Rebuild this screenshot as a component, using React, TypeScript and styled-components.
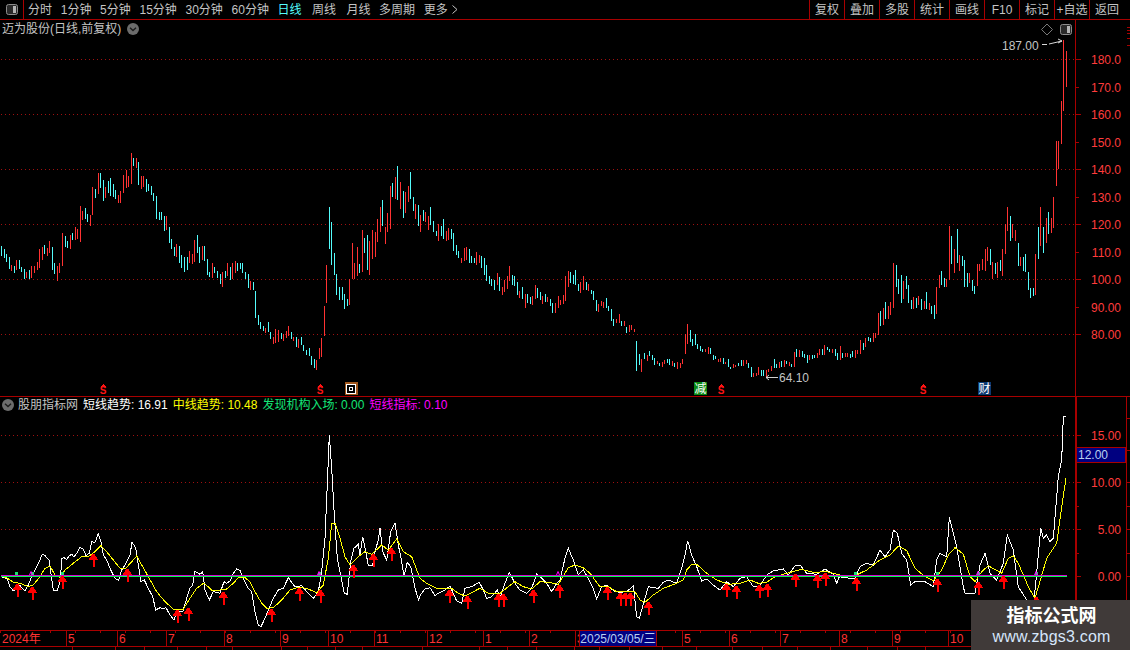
import React from "react";
import styled, { createGlobalStyle } from "styled-components";

const RED_LINE = "#a80000";
const GREY = "#c4c4c4";

const Global = createGlobalStyle`
  html, body { margin: 0; padding: 0; background: #000; overflow: hidden; }
  #root { width: 1130px; height: 650px; }
`;

const Screen = styled.div`
  position: relative;
  width: 1130px;
  height: 650px;
  overflow: hidden;
  display: flex;
  flex-direction: column;
  background: #000;
  color: ${GREY};
  font: 12px/1 "Liberation Sans", "Noto Sans CJK SC", sans-serif;
`;

const Toolbar = styled.header`
  flex: none;
  height: 19px;
  display: flex;
  align-items: stretch;
  border-bottom: 1px solid ${RED_LINE};
`;
const PanelToggle = styled.div`
  width: 23px;
  display: flex;
  align-items: center;
  justify-content: center;
  border-right: 1px solid ${RED_LINE};
`;
const PeriodList = styled.nav`
  display: flex;
  align-items: center;
  gap: 8.7px;
  padding-left: 4px;
`;
const Period = styled.span<{ $active?: boolean; $roomy?: boolean }>`
  color: ${(p) => (p.$active ? "#54fcfc" : GREY)};
  margin-right: ${(p) => (p.$roomy ? 1.7 : 0)}px;
  white-space: nowrap;
  display: inline-flex;
  align-items: center;
  gap: 4px;
`;
const ActionList = styled.div`
  margin-left: auto;
  display: flex;
  padding-right: 6px;
`;
const Action = styled.span`
  width: 34px;
  border-left: 1px solid ${RED_LINE};
  display: flex;
  align-items: center;
  justify-content: center;
  white-space: nowrap;
`;

const PricePane = styled.section`
  flex: none;
  height: 376px;
  display: flex;
  border-bottom: 1px solid ${RED_LINE};
`;
const IndicatorPane = styled.section`
  flex: none;
  height: 233px;
  display: flex;
`;
const Plot = styled.div`
  position: relative;
  width: 1075px;
  flex: none;
`;
const AxisBox = styled.div<{ $thick?: boolean }>`
  position: relative;
  flex: 1;
  border-left: ${(p) => (p.$thick ? 2 : 1)}px solid ${RED_LINE};
`;
const Drawing = styled.svg`
  display: block;
  font-family: "Liberation Sans", "Noto Sans CJK SC", sans-serif;
  font-size: 12px;
`;
const ChartTitle = styled.div`
  position: absolute;
  left: 2px;
  top: 3px;
  display: flex;
  align-items: center;
  gap: 6px;
`;
const Legend = styled.div`
  position: absolute;
  left: 2px;
  top: 2px;
  display: flex;
  align-items: center;
  gap: 5px;
`;
const LegendName = styled.span`
  margin-left: -1px;
`;
const LegendItem = styled.span<{ $color: string }>`
  color: ${(p) => p.$color};
  white-space: nowrap;
`;
const PriceBadge = styled.div`
  position: absolute;
  left: 0;
  top: 50px;
  width: 49px;
  height: 16px;
  box-sizing: border-box;
  border: 1px solid ${RED_LINE};
  border-left: none;
  background: #000080;
  color: #b8d0f0;
  display: flex;
  align-items: center;
  padding-left: 1px;
  font-size: 12px;
`;

const Timeline = styled.footer`
  position: relative;
  flex: none;
  height: 15px;
  display: flex;
  border-top: 1px solid ${RED_LINE};
  border-bottom: 1px solid ${RED_LINE};
  color: #ff3232;
  background: repeating-linear-gradient(90deg, ${RED_LINE} 0 1px, transparent 1px 25px) top left / 100% 2px no-repeat;
`;
const TimeCell = styled.span<{ $w: number }>`
  width: ${(p) => p.$w}px;
  flex: none;
  box-sizing: border-box;
  overflow: hidden;
  border-left: 1px solid ${RED_LINE};
  padding-left: 1px;
  display: flex;
  align-items: center;
  &:first-child { border-left: none; padding-left: 2px; }
`;
const DateBadge = styled.div`
  flex: none;
  width: 78px;
  height: 17px;
  margin: -1px 25px -1px 0;
  box-sizing: border-box;
  border: 1px solid ${RED_LINE};
  background: #000080;
  color: #b8d0f0;
  display: flex;
  align-items: center;
  justify-content: center;
  white-space: nowrap;
`;
const TabStrip = styled.div`
  flex: none;
  height: 3px;
  display: flex;
`;
const TabEdge = styled.span<{ $w: number }>`
  width: ${(p) => p.$w}px;
  flex: none;
  box-sizing: border-box;
  border-right: 1px solid ${RED_LINE};
`;
const Watermark = styled.aside`
  position: absolute;
  right: 0;
  bottom: 0;
  width: 159px;
  height: 50px;
  background: #403a39;
  display: flex;
  flex-direction: column;
  align-items: center;
  padding-left: 2px;
  box-sizing: border-box;
`;
const WatermarkTitle = styled.div`
  margin-top: 6px;
  color: #fff;
  font-size: 18px;
  line-height: 20px;
  font-weight: 700;
`;
const WatermarkUrl = styled.div`
  margin-top: 2px;
  color: #d6e6fb;
  font-size: 16px;
  line-height: 18px;
  letter-spacing: 0.2px;
`;

const CANDLES_A = `c4,288,318 c13,297,324 c19,312,336 c28,321,357 r34,345,363 c43,348,369 r49,330,360 c58,330,357 c64,351,366 c73,357,387 r79,366,384 c88,360,387 r94,348,384 r103,348,369 r112,336,360 r118,297,354 r127,291,330 c133,285,312 r142,294,318 r148,273,309 c157,291,360 c163,339,372 r172,348,393 r178,339,369 r187,249,348 c196,258,291 c202,273,294 r211,255,297 c217,249,270 r226,231,270 r232,237,267 r241,168,276 r247,183,210 c256,174,207 c262,192,216 r271,195,228 r277,111,195 c286,117,144 r295,69,132 c301,69,114 c310,90,153 r316,111,144 c325,93,129 c331,84,138 c340,102,141 c346,120,147 r355,135,159 r361,123,159 r370,75,129 r379,60,114 r385,78,111 r394,9,102 c400,24,48 r409,24,54 c415,36,105 r424,78,117 r430,78,111 c439,87,126 c445,102,123 c454,108,135 c460,129,153 c469,138,207 c478,186,210 c484,186,210 c493,198,243 r499,198,240 c508,231,279 c514,267,297 c523,291,318 r529,282,321 c538,288,339 c544,315,354 c553,321,366 c562,321,360 r568,303,339 r577,312,342 r583,270,336 c592,255,309 c598,291,339 r607,288,330 c613,288,333 c622,327,375 c628,366,381 r637,339,384 c643,351,369 c652,363,384 c661,372,402 r667,366,411 c676,363,384 r682,339,378 c691,351,390 r697,339,387 r706,333,369 c712,339,363 c721,339,357 c727,339,369 c736,366,387 c745,372,414 r751,393,420 c760,396,420 c766,423,504 c775,495,525 c781,516,537 c790,528,543 r796,534,549 c805,516,546 c811,546,567 r820,561,582 r826,537,579 r835,540,576 c844,549,567 r850,552,573 r859,543,564 r865,528,558 c874,546,567 r880,561,573 c889,561,591 r895,567,594 c904,561,585 c910,585,603 c919,600,615 c928,594,618 c934,618,645 c943,627,654 r949,630,660 r958,594,627 r964,564,621 r973,468,558 r979,345,459 c988,171,297 c994,216,345 c1003,309,375 c1009,372,435 c1018,411,450`;
const CANDLES_B = `c7,411,450 c13,432,477 c22,447,468 r28,387,465 r37,279,387 r43,339,387 r52,291,378 c58,342,369 r67,240,366 c73,264,309 c82,255,360 r88,273,375 r97,240,327 r106,246,321 r112,207,276 r121,171,246 c127,150,228 r136,231,282 r142,189,246 r151,108,237 c157,99,141 r166,81,147 c172,48,150 r181,96,177 c190,123,204 r196,126,189 r205,108,156 c211,66,147 c220,141,183 r226,162,207 c235,165,228 r241,195,246 c250,180,213 r256,186,216 r265,198,240 c271,171,225 c280,213,246 c289,243,258 r295,222,273 c304,228,258 c310,207,267 r319,243,273 r325,234,270 c334,237,267 c340,249,303 c349,285,315 c355,303,324 r364,324,339 r373,294,333 r379,291,330 c388,297,339 c394,318,339 c403,324,339 r409,306,345 r418,315,339 c424,318,354 c433,324,375 c439,345,393 c448,378,402 c454,387,408 c463,390,420 r472,369,405 c478,381,423 r487,411,435 r493,390,426 r502,378,417 r508,348,393 c517,375,405 c523,378,408 c532,396,435 r538,423,444 c547,411,447 r556,432,474 c562,432,459 c571,441,462 r577,438,465 r586,405,447 c592,414,444 c601,426,450 r607,438,462 c616,432,456 r622,441,456 c631,447,468 c637,459,489 r646,459,489 r655,438,474 r661,450,465 r670,435,462 r676,378,453 r685,363,411 c691,366,399 c700,375,402 c706,360,405 c715,402,423 r721,396,429 r730,378,420 c739,396,420 r745,402,423 c754,420,432 c760,423,450 c769,450,483 r775,462,486 r784,453,468 r790,456,474 c799,444,474 c805,468,483 c814,477,513 c820,507,528 r829,507,519 r838,492,519 c844,513,528 r853,513,528 c859,531,549 r868,525,546 r874,525,540 r883,537,546 c889,573,663 c898,612,645 r904,627,666 c913,609,627 r922,615,633 c928,603,618 c937,615,630 c943,624,645 r952,633,642 c958,639,648 r967,636,651 r973,630,642 c982,627,639 c988,627,645 r997,633,648 c1003,639,651 r1012,636,657`;
const CANDLES_C = `r0,549,564 r7,537,552 r16,462,522 r22,432,492 c31,450,486 c37,477,498 c46,462,495 c52,492,507 c61,498,513 c67,507,516 r76,507,516 r85,501,522 c91,504,522 c100,525,540 c106,528,537 r115,537,546 r121,534,546 c130,534,552 r136,546,552 c145,537,561 c151,561,567 r160,552,564 r166,555,561 c175,549,558 c184,540,558 r190,540,558 r199,540,552 c205,549,564 c214,561,591 r220,579,591 r229,579,588 r235,561,585 c244,570,588 c250,570,588 r259,570,594 r265,567,576 r274,558,573 c283,537,564 c289,552,564 r298,546,564 c304,543,561 r313,540,561 c319,543,552 r328,546,558 c334,552,561 r343,516,561 c349,507,531 r358,510,531 c367,513,531 c373,522,534 c382,525,549 r388,525,540 c397,525,537 c403,525,534 r412,519,534 r418,507,525 c427,507,525 r433,495,525 c442,501,510 c448,507,516 r457,507,519 c466,507,528 c472,519,540 r481,498,540 c487,519,534 r496,519,531 r502,519,531 c511,522,534 c517,513,531 r526,510,534 r532,510,522 r541,480,522 c550,489,510 r556,474,501 c565,471,483 c571,474,486 r580,459,486 r586,459,474 r595,399,465 c601,393,438 r610,384,435 c616,366,417 r625,378,417 r631,366,405 r640,249,384 c649,255,321 c655,297,342 c664,285,369 r670,303,357 c679,288,327 c685,315,369 c694,360,387 r700,351,387 c709,354,384 r715,348,375 c724,357,390 r733,363,387 c739,336,387 r748,369,390 c754,378,402 c763,375,417 r769,321,402 r778,285,324 c784,273,315 c793,294,321 r799,297,321 r808,138,300 c814,168,252 r823,207,279 c832,147,249 r838,225,273 c847,228,258 c853,240,321 c862,279,321 r868,279,309 c877,300,333 c883,318,342 r892,252,318 r898,252,273 r907,237,270 r916,207,273 r922,201,243 c931,207,255 r937,246,297 c946,249,282 r952,246,294 c961,240,273 r967,207,288 r976,132,222 r982,81,153 c991,108,183 r997,132,174 r1006,150,183 c1015,189,258 r1021,231,258 c1030,231,273 c1036,222,276 c1045,276,330 c1051,324,354 c1060,324,348 r1066,222,345 c1075,141,237 r1081,81,198 c1090,141,219 r1099,114,189 c1105,96,162 r1114,114,159 r1120,51,144`;

type Bar = { x: number; y: number; h: number; up: boolean };

const parseCandles = (src: string, x0: number, y0: number): Bar[] =>
  src.split(" ").map((t) => {
    const [zx, a, b] = t.slice(1).split(",").map(Number);
    const y = Math.round(y0 + a / 3);
    return { x: Math.floor(x0 + zx / 3), y, h: Math.max(1, Math.round(y0 + b / 3) - y), up: t[0] === "r" };
  });

const BARS: Bar[] = [
  ...parseCandles(CANDLES_A, 0, 150),
  ...parseCandles(CANDLES_B, 340, 150),
  ...parseCandles(CANDLES_C, 680, 180),
  { x: 1056, y: 141, h: 45, up: true },
  { x: 1058, y: 141, h: 28, up: true },
  { x: 1061, y: 101, h: 43, up: true },
  { x: 1063, y: 40, h: 71, up: true },
  { x: 1066, y: 51, h: 36, up: true },
];

const pts = (src: number[], x0: number, y0: number) => {
  const out: string[] = [];
  for (let i = 0; i < src.length; i += 2) out.push(`${(x0 + src[i] / 3).toFixed(1)},${(y0 + src[i + 1] / 3).toFixed(1)}`);
  return out.join(" ");
};

const WHITE_A = [3,455,15,458,22,462,30,485,40,498,52,490,60,482,75,498,85,480,95,455,108,430,118,410,127,387,135,392,147,405,152,440,160,495,172,496,180,470,186,400,192,398,200,403,208,392,215,388,222,396,230,385,240,367,250,372,258,392,268,385,275,350,285,352,295,326,303,350,310,390,320,405,332,435,345,460,356,466,365,435,378,415,390,390,396,352,407,368,415,420,423,470,433,465,445,490,458,515,467,555,480,548,490,552,498,548,510,570,522,585,530,560,548,560,560,520,570,490,578,480,584,440,590,442,600,448,608,440,615,495,628,525,640,500,660,505,672,470,680,475,690,468,700,445,710,432,720,436,730,460,745,490,755,500,765,560,775,600,783,605,795,580,805,555,820,520,835,495,850,490,865,458,885,485,905,482,920,500,940,520,955,500,965,440,975,340,983,150,988,30,995,130,1003,270,1012,400,1022,450,1033,505,1042,508,1052,410,1062,370,1075,358,1080,390,1088,335,1098,385,1105,420,1118,420,1125,380,1135,345,1140,310,1148,380,1160,405,1172,320,1185,293,1195,360,1205,410,1212,455,1222,412,1232,425,1245,490,1256,526];
const WHITE_B = [0,212,15,192,30,188,45,212,55,205,75,195,90,183,100,205,110,228,125,235,135,190,155,185,178,172,190,195,200,220,215,215,232,195,240,218,255,175,268,142,285,175,300,195,320,205,335,190,350,147,365,160,380,175,395,200,410,175,420,165,435,100,445,70,460,105,475,150,490,135,505,160,520,190,530,222,545,185,560,180,585,200,600,202,620,200,640,183,650,275,658,280,672,230,685,185,700,188,715,190,730,172,745,165,770,175,785,130,795,90,803,47,815,90,830,125,845,168,860,162,880,180,900,195,920,170,940,185,960,160,980,155,1000,185,1020,182,1040,150,1060,138,1090,132,1105,150,1125,122,1140,120,1160,145,1190,148,1215,132,1240,148,1250,175,1260,150];
const WHITE_C = [125,532,150,535,165,535,180,500,200,490,220,495,240,450,255,470,270,450,280,390,292,400,305,460,320,480,332,555,345,545,375,545,400,560,410,480,420,460,440,470,448,352,470,440,490,560,495,580,525,580,540,495,555,460,570,520,590,540,610,490,622,405,640,450,655,560,680,600,700,620,708,540,722,385,730,415,740,405,750,425,760,415,775,230,785,180,790,50,797,50];
const YELLOW_A = [3,453,20,458,40,472,60,475,85,485,100,480,120,455,135,430,150,423,165,450,180,458,195,435,220,415,245,395,265,395,285,380,303,362,320,380,340,405,360,430,375,432,395,410,410,393,425,420,445,455,470,500,495,530,520,552,550,552,570,520,590,490,612,474,635,495,660,495,680,492,700,475,715,458,735,458,750,470,765,500,785,535,800,550,820,548,845,525,870,495,895,487,920,490,950,503,970,480,985,400,995,295,1005,295,1020,340,1035,395,1050,420,1075,395,1095,380,1115,388,1145,360,1165,375,1190,342,1210,380,1235,395,1256,450];
const YELLOW_B = [0,160,20,175,50,190,75,192,95,190,115,205,135,213,160,200,180,190,205,205,240,205,265,185,285,170,310,185,335,192,360,170,385,172,415,178,432,150,445,128,465,120,490,128,510,145,540,185,565,185,590,200,625,200,645,200,660,225,675,232,700,210,730,190,770,175,790,165,800,135,815,118,830,118,860,145,890,165,925,178,960,175,990,165,1015,175,1040,172,1065,155,1100,145,1145,133,1180,142,1220,140,1260,150];
const YELLOW_C = [130,528,165,527,200,510,240,480,270,465,295,438,320,452,345,505,375,530,400,542,425,510,445,465,465,443,490,462,510,530,525,545,545,515,565,497,605,520,625,475,640,468,655,490,685,560,705,595,740,475,770,430,785,320,798,235];

const whitePath = [pts(WHITE_A, 0, 425), pts(WHITE_B, 420, 525), pts(WHITE_C, 800, 400)].join(" ");
const yellowPath = [pts(YELLOW_A, 0, 425), pts(YELLOW_B, 420, 525), pts(YELLOW_C, 800, 400)].join(" ");

const toArrows = (src: number[], x0: number, y0: number) => {
  const out: [number, number][] = [];
  for (let i = 0; i < src.length; i += 2) out.push([Math.round(x0 + src[i] / 3), Math.round(y0 + src[i + 1] / 3)]);
  return out;
};
const ARROWS = [
  ...toArrows([51,478,95,485,187,452,278,388,380,432,530,556,564,550,668,500,812,552,897,490,960,496,1058,420,1118,388,1172,370], 0, 425),
  ...toArrows([87,195,141,213,234,208,249,208,340,195,417,180,561,187,600,203,615,203,630,203,683,232,918,177,948,183,1017,180,1041,177,1125,147,1192,150,1215,145], 420, 525),
  ...toArrows([168,533,411,538,534,546,608,528,707,592], 800, 400),
];

const GREEN_DOTS = [16, 32, 62, 319, 855, 937, 978, 1036];
const MAGENTA_CARETS = [31, 319, 558, 978, 1036];

const PanelIcon = ({ x = 0, y = 0 }: { x?: number; y?: number }) => (
  <g transform={`translate(${x} ${y})`}>
    <rect x="0.5" y="0.5" width="11" height="10" rx="2" fill="#2a2a2a" stroke="#8c8c8c" />
    <rect x="7" y="2" width="3" height="7" fill="#b4b4b4" />
  </g>
);

const Chevron = () => (
  <svg width="12" height="12" viewBox="0 0 12 12">
    <circle cx="6" cy="6" r="6" fill="#6c6c6c" />
    <path d="M3 4.8 L6 7.6 L9 4.8" fill="none" stroke="#1c1c1c" strokeWidth="1.4" />
  </svg>
);

const DollarMark = ({ x }: { x: number }) => (
  <g>
    <path d={`M${x} 384 L${x + 3} 387 H${x - 3} Z`} fill="#ff1414" shapeRendering="crispEdges" />
    <text x={x} y="394" textAnchor="middle" fontSize="10" fontWeight="700" fill="#ff1414">S</text>
  </g>
);

const PERIODS = ["分时", "1分钟", "5分钟", "15分钟", "30分钟", "60分钟", "日线", "周线", "月线", "多周期"];
const ACTIONS = ["复权", "叠加", "多股", "统计", "画线", "F10", "标记", "+自选", "返回"];
const PRICE_LABELS = ["180.0", "170.0", "160.0", "150.0", "140.0", "130.0", "120.0", "110.0", "100.0", "90.00", "80.00"];
const GRID_Y = [59, 114, 169, 224, 279, 334];
const INDICATOR_GRID = [435, 482, 529];
const INDICATOR_LABELS: [string, number][] = [["15.00", 435], ["10.00", 482], ["5.00", 529], ["0.00", 576]];
const CELLS_BEFORE_DATE: [string, number][] = [["2024年", 66], ["5", 51], ["6", 49], ["7", 58], ["8", 56], ["9", 48], ["10", 46], ["11", 53], ["12", 56], ["1", 46], ["2", 46], ["3", 4]];
const CELLS_AFTER_DATE: [string, number][] = [["5", 47], ["6", 51], ["7", 59], ["8", 53], ["9", 56], ["10", 182]];
const TAB_WIDTHS = [73, 43, 29, 33, 29, 26, 49, 26, 28, 27, 60, 57, 28, 29, 38, 25, 30, 33, 34, 36, 30, 35, 33, 37, 30, 28];

const App = () => (
  <Screen>
    <Global />
    <Toolbar>
      <PanelToggle>
        <svg width="12" height="11"><PanelIcon /></svg>
      </PanelToggle>
      <PeriodList>
        {PERIODS.map((p) => (
          <Period key={p} $active={p === "日线"} $roomy={p === "日线" || p === "周线"}>{p}</Period>
        ))}
        <Period>
          更多
          <svg width="6" height="9" viewBox="0 0 6 9">
            <path d="M0.5 0.5 L5 4.5 L0.5 8.5" fill="none" stroke={GREY} />
          </svg>
        </Period>
      </PeriodList>
      <ActionList>
        {ACTIONS.map((a) => (
          <Action key={a}>{a}</Action>
        ))}
      </ActionList>
    </Toolbar>

    <PricePane>
      <Plot>
        <Drawing width="1075" height="376" viewBox="0 20 1075 376">
          {GRID_Y.map((y) => (
            <line key={y} x1="1" x2="1075" y1={y + 0.5} y2={y + 0.5} stroke="#a01010" strokeDasharray="1 3" />
          ))}
          <g shapeRendering="crispEdges">
            {BARS.map((b, i) => (
              <rect key={i} x={b.x} y={b.y} width="1" height={b.h} fill={b.up ? "#ff3232" : "#54fcfc"} />
            ))}
          </g>
          <DollarMark x={103} />
          <DollarMark x={320} />
          <DollarMark x={721} />
          <DollarMark x={923} />
          <g shapeRendering="crispEdges">
            <rect x="345" y="382" width="13" height="13" fill="#a0561c" />
            <rect x="346.5" y="384.5" width="9" height="9" fill="#000" stroke="#fff" />
            <rect x="349.5" y="387.5" width="3" height="3" fill="#000" stroke="#fff" />
            <rect x="694" y="382" width="13" height="13" fill="#0a8a14" />
            <rect x="978" y="382" width="13" height="13" fill="#0c3a72" />
          </g>
          <text x="700.5" y="393" textAnchor="middle" fontSize="12" fill="#fff">减</text>
          <text x="984.5" y="393" textAnchor="middle" fontSize="12" fill="#fff">财</text>
          <text x="1002" y="50" fill={GREY}>187.00</text>
          <path d="M1042 44.5 H1047 M1049 44 L1062 41 M1058 39 L1062 41 L1058 43" fill="none" stroke="#d8d8d8" />
          <text x="779" y="382" fill={GREY}>64.10</text>
          <path d="M778 377.5 H766 M769 375 L766 377.5 L769 380" fill="none" stroke="#d0d0d0" />
          <path d="M1047 24 L1052.500 29.500 L1047 35 L1041.500 29.500 Z" fill="none" stroke="#7a7a7a" />
          <PanelIcon x={1060} y={24} />
        </Drawing>
        <ChartTitle>
          迈为股份(日线,前复权)
          <Chevron />
        </ChartTitle>
      </Plot>
      <AxisBox>
        <Drawing width="54" height="376" viewBox="1076 20 54 376">
          {PRICE_LABELS.map((l, i) => {
            const y = 59 + i * 27.5;
            return (
              <g key={l}>
                <line x1="1076" x2={i % 2 ? 1079 : 1081} y1={Math.round(y) + 0.5} y2={Math.round(y) + 0.5} stroke={RED_LINE} />
                <text x="1121" y={y + 5} textAnchor="end" fill="#ff3c3c">{l}</text>
              </g>
            );
          })}
          {[27, 30, 33, 38, 45].map((y) => (
            <line key={y} x1="1127" x2="1130" y1={y + 0.5} y2={y + 0.5} stroke={RED_LINE} />
          ))}
        </Drawing>
      </AxisBox>
    </PricePane>

    <IndicatorPane>
      <Plot>
        <Drawing width="1075" height="233" viewBox="0 397 1075 233">
          {INDICATOR_GRID.map((y) => (
            <line key={y} x1="1" x2="1075" y1={y + 0.5} y2={y + 0.5} stroke="#a01010" strokeDasharray="1 3" />
          ))}
          <g shapeRendering="crispEdges">
            <polyline points={whitePath} fill="none" stroke="#fff" />
            <polyline points={yellowPath} fill="none" stroke="#ffff00" />
            <rect x="1" y="575" width="1066" height="1" fill="#d800d8" />
            <rect x="1" y="576" width="1066" height="1" fill="#00ff50" />
            {GREEN_DOTS.map((x) => (
              <rect key={x} x={x - 1} y="572" width="3" height="3" fill="#20e070" />
            ))}
            {ARROWS.map(([x, y], i) => (
              <path
                key={i}
                d={`M${x - 0.5} ${y} H${x + 1.5} L${x + 5.5} ${y + 6} H${x + 1.5} V${y + 13} H${x - 0.5} V${y + 6} H${x - 4.5} Z`}
                fill="#ff0000"
              />
            ))}
          </g>
          {MAGENTA_CARETS.map((x) => (
            <path key={x} d={`M${x - 1.5} 575 L${x} 571.500 L${x + 1.5} 575`} fill="none" stroke="#ff00ff" />
          ))}
        </Drawing>
        <Legend>
          <Chevron />
          <LegendName>股朋指标网</LegendName>
          <LegendItem $color="#ffffff">短线趋势: 16.91</LegendItem>
          <LegendItem $color="#ffff00">中线趋势: 10.48</LegendItem>
          <LegendItem $color="#14e678">发现机构入场: 0.00</LegendItem>
          <LegendItem $color="#ff00ff">短线指标: 0.10</LegendItem>
        </Legend>
      </Plot>
      <AxisBox $thick>
        <Drawing width="53" height="233" viewBox="1077 397 53 233">
          {INDICATOR_LABELS.map(([l, y]) => (
            <g key={l}>
              <line x1="1077" x2="1081" y1={y + 0.5} y2={y + 0.5} stroke={RED_LINE} />
              <text x="1121" y={y + 5} textAnchor="end" fill="#ff3c3c">{l}</text>
            </g>
          ))}
          {[506, 553].map((y) => (
            <line key={y} x1="1077" x2="1079" y1={y + 0.5} y2={y + 0.5} stroke={RED_LINE} />
          ))}
          <rect x="1126" y="397" width="1" height="233" fill={RED_LINE} />
          {[418, 450, 482, 506, 529, 553, 576, 600].map((y) => (
            <line key={y} x1="1127" x2="1130" y1={y + 0.5} y2={y + 0.5} stroke={RED_LINE} />
          ))}
        </Drawing>
        <PriceBadge>12.00</PriceBadge>
      </AxisBox>
    </IndicatorPane>

    <Timeline>
      {CELLS_BEFORE_DATE.map(([l, w], i) => (
        <TimeCell key={i} $w={w}>{l}</TimeCell>
      ))}
      <DateBadge>2025/03/05/三</DateBadge>
      {CELLS_AFTER_DATE.map(([l, w], i) => (
        <TimeCell key={i} $w={w}>{l}</TimeCell>
      ))}
    </Timeline>
    <TabStrip>
      {TAB_WIDTHS.map((w, i) => (
        <TabEdge key={i} $w={w} />
      ))}
    </TabStrip>

    <Watermark>
      <WatermarkTitle>指标公式网</WatermarkTitle>
      <WatermarkUrl>www.zbgs3.com</WatermarkUrl>
    </Watermark>
  </Screen>
);

export default App;
